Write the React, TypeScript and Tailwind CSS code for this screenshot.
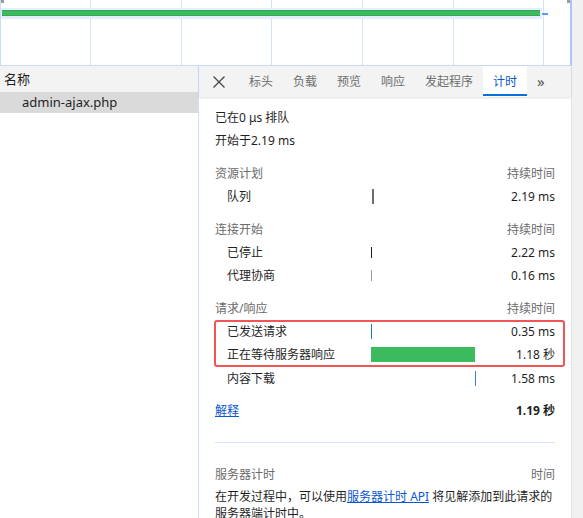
import React from "react";

const font = {
  fontFamily: '"Segoe UI", "Noto Sans", "Noto Sans CJK SC", sans-serif',
};

const Row = ({
  label,
  value,
  bar,
}: {
  label: string;
  value: string;
  bar: React.ReactNode;
}) => (
  <div className="grid grid-cols-[156px_110px_1fr] items-center h-[23px]">
    <span className="pl-3 text-[#1f1f1f]">{label}</span>
    <div className="relative h-[15px]">{bar}</div>
    <span className="text-right text-[#1f1f1f]">{value}</span>
  </div>
);

const Header = ({ left, right }: { left: string; right: string }) => (
  <div className="flex justify-between h-[23px] items-center text-[#6b6b6b]">
    <span>{left}</span>
    <span>{right}</span>
  </div>
);

export default function App() {
  const gridLines = [89, 180, 270, 361, 452, 542];
  return (
    <div
      className="w-[583px] h-[518px] overflow-hidden bg-white text-[12px] flex flex-col"
      style={font}
    >
      {/* overview */}
      <div className="flex h-[66px] shrink-0">
        <div className="relative w-[572px] h-full border-l border-[#c9dcfb] border-r-2 border-r-[#a8c7fa] border-b border-b-[#c9dcfb]">
          {gridLines.map((x) => (
            <div
              key={x}
              className="absolute top-0 bottom-0 w-px bg-[#d3e2fb]"
              style={{ left: x }}
            />
          ))}
          <div className="absolute left-0 top-0 w-[3px] h-[3px] bg-[#9a9a9a]" />
          <div className="absolute right-0 top-0 w-[3px] h-[3px] bg-[#9a9a9a]" />
          <div className="absolute left-0 top-[8px] w-[541px] h-[11px] bg-[#e6eefc]" />
          <div className="absolute left-[1px] top-[10px] w-[538px] h-[6px] bg-[#3cba5e] border-y border-[#34a853]" />
          <div className="absolute left-[541px] top-[13px] w-[6px] h-[2px] bg-[#5b9cf0]" />
        </div>
        <div className="flex-1 bg-[#f1f1f1]" />
      </div>

      <div className="flex flex-1 min-h-0">
        {/* left list */}
        <div className="w-[199px] shrink-0 border-r border-[#cfdff9] flex flex-col">
          <div className="h-[26px] shrink-0 bg-[#f3f3f3] flex items-center pl-1 pt-[1px] text-[13px] text-[#1f1f1f]">
            名称
          </div>
          <div className="h-[21px] shrink-0 bg-[#dadada] flex items-center pl-[22px] text-[13px] text-[#1f1f1f]">
            admin-ajax.php
          </div>
        </div>

        {/* right panel */}
        <div className="w-[372px] shrink-0 flex flex-col min-h-0">
          <div className="h-[31px] shrink-0 bg-[#f3f3f3] flex items-stretch shadow-[0_1px_2px_rgba(0,0,0,0.12)] relative z-10">
            <div className="w-[40px] flex items-center justify-center text-[#474747]">
              <svg width="14" height="14" viewBox="0 0 14 14">
                <path d="M1.5 1.5 L12.5 12.5 M12.5 1.5 L1.5 12.5" stroke="#474747" strokeWidth="1.3" />
              </svg>
            </div>
            {["标头", "负载", "预览", "响应", "发起程序"].map((t) => (
              <div key={t} className="px-[10px] pt-px flex items-center text-[#6e6e6e]">
                {t}
              </div>
            ))}
            <div className="px-[10px] pt-px flex items-center bg-white text-[#0b57d0] relative">
              计时
              <div className="absolute left-0 right-0 bottom-[1px] h-[2px] bg-[#0b70d9]" />
            </div>
            <div className="px-[10px] flex items-center text-[#555] text-[15px]">»</div>
          </div>

          <div className="flex-1 min-h-0 overflow-hidden px-4 pt-[9px]">
            <div className="h-[23px] flex items-center text-[#1f1f1f]">已在0 μs 排队</div>
            <div className="h-[23px] flex items-center text-[#1f1f1f]">开始于2.19 ms</div>

            <div className="h-[10px]" />
            <Header left="资源计划" right="持续时间" />
            <Row
              label="队列"
              value="2.19 ms"
              bar={<div className="absolute left-[1px] top-0 w-[2px] h-full bg-[#6e6e6e]" />}
            />

            <div className="h-[10px]" />
            <Header left="连接开始" right="持续时间" />
            <Row
              label="已停止"
              value="2.22 ms"
              bar={<div className="absolute left-0 top-[2px] w-px h-[11px] bg-[#1f1f1f]" />}
            />
            <Row
              label="代理协商"
              value="0.16 ms"
              bar={<div className="absolute left-0 top-[2px] w-px h-[11px] bg-[#9a9a9a]" />}
            />

            <div className="h-[10px]" />
            <Header left="请求/响应" right="持续时间" />
            <div className="relative">
              <div className="absolute -left-[1px] -right-[10px] top-0 -bottom-[1px] border-2 border-[#f05656] rounded-[3px]" />
              <Row
                label="已发送请求"
                value="0.35 ms"
                bar={<div className="absolute left-0 top-0 w-px h-full bg-[#1b7fa8]" />}
              />
              <Row
                label="正在等待服务器响应"
                value="1.18 秒"
                bar={<div className="absolute left-0 top-0 w-[104px] h-full bg-[#3cba5e]" />}
              />
            </div>
            <div className="h-px" />
            <Row
              label="内容下载"
              value="1.58 ms"
              bar={<div className="absolute left-[104px] top-0 w-px h-full bg-[#3a7bd5]" />}
            />

            <div className="h-[9px]" />
            <div className="flex justify-between h-[23px] items-center">
              <a className="text-[#0b57d0] underline">解释</a>
              <span className="font-bold text-[#1f1f1f]">1.19 秒</span>
            </div>

            <div className="h-[20px]" />
            <div className="h-px bg-[#d3e3fd]" />
            <div className="h-[20px]" />
            <Header left="服务器计时" right="时间" />
            <p className="text-[#1f1f1f] leading-[17px] mt-[2px]">
              在开发过程中，可以使用
              <a className="text-[#0b57d0] underline">服务器计时 API</a>
              {" "}将见解添加到此请求的服务器端计时中。
            </p>
          </div>
        </div>
        <div className="flex-1 bg-[#f1f1f1] border-l border-[#e4e4e4]" />
      </div>
    </div>
  );
}
